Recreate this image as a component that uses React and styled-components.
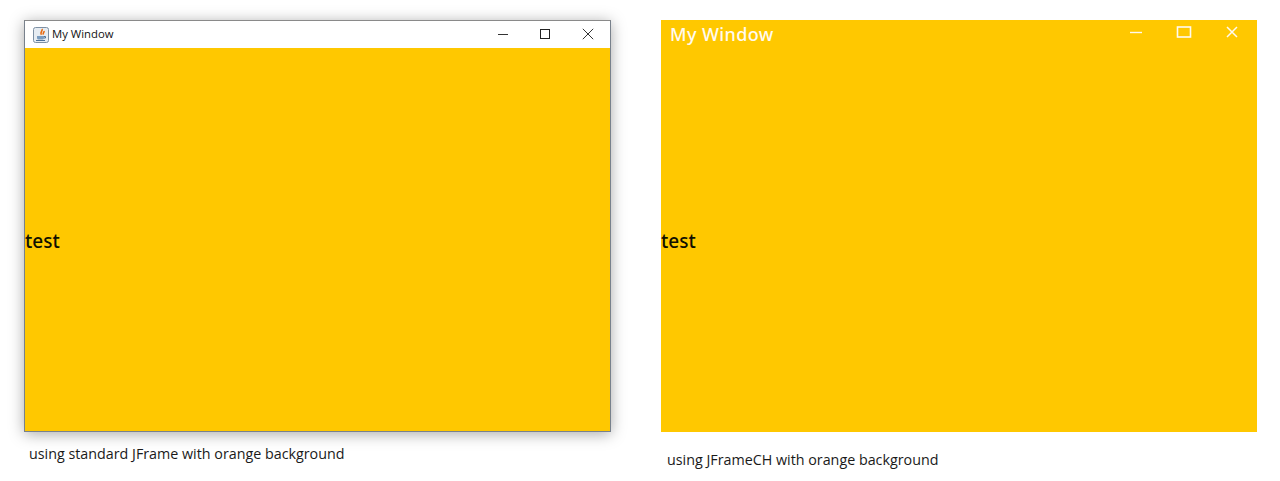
import React from 'react';
import styled, { createGlobalStyle } from 'styled-components';

const GlobalStyle = createGlobalStyle`
    html, body {
        margin: 0;
        padding: 0;
        background: #ffffff;
        overflow: hidden;
    }
`;

const Page = styled.div`
    display: flex;
    width: 1280px;
    height: 481px;
    box-sizing: border-box;
    padding: 20px 0 0 24px;
    gap: 50px;
    background: #ffffff;
    overflow: hidden;
`;

const Column = styled.div`
    display: flex;
    flex-direction: column;
    width: ${(props) => props.$width}px;
`;

const StandardFrame = styled.div`
    display: flex;
    flex-direction: column;
    height: 412px;
    box-sizing: border-box;
    border: 1px solid #78818c;
    border-top-color: #8a8a8a;
    box-shadow: 0 2px 14px rgba(0, 0, 0, 0.34);
`;

const TitleBar = styled.div`
    display: flex;
    align-items: center;
    flex: none;
    height: 27px;
    padding-left: 8px;
    background: #ffffff;
`;

const WindowTitle = styled.span`
    margin: 0 0 2px 3px;
    font: 11.3px "Open Sans", "Noto Sans", sans-serif;
    color: #111111;
    flex: 1;
`;

const ControlButton = styled.div`
    display: flex;
    align-items: center;
    justify-content: center;
    width: ${(props) => props.$width}px;
    height: 27px;
    padding-bottom: 2px;
    box-sizing: border-box;
`;

const Content = styled.div`
    flex: 1;
    display: flex;
    align-items: center;
    background: #ffc800;
`;

const TestLabel = styled.span`
    position: relative;
    top: ${(props) => props.$shift}px;
    font: 500 19px "Noto Sans", Lato, sans-serif;
    color: #111000;
`;

const CustomFrame = styled.div`
    position: relative;
    display: flex;
    height: 412px;
    background: #ffc800;
`;

const CustomTitle = styled.span`
    position: absolute;
    top: 2px;
    left: 9px;
    font: 500 18px "Noto Sans", Lato, sans-serif;
    letter-spacing: 0.4px;
    color: #fffaf0;
`;

const CustomControls = styled.div`
    position: absolute;
    top: 0;
    right: 0;
    display: flex;
    padding-right: 1px;
`;

const CustomButton = styled.div`
    display: flex;
    align-items: center;
    justify-content: center;
    width: 48px;
    height: 24px;
`;

const Caption = styled.p`
    margin: ${(props) => props.$top}px 0 0 ${(props) => props.$left}px;
    font: 14.3px "Open Sans", "Noto Sans", sans-serif;
    color: #1a1a1a;
    white-space: nowrap;
`;

const JavaIcon = () => (
    <svg width="16" height="16" viewBox="0 0 16 16">
        <rect x="0.5" y="0.5" width="15" height="15" rx="2" fill="#e6ecf2" stroke="#7d90a4" />
        <path d="M9 2c1.2 1.8-2.6 3-.6 5.8M11 4c.6 1.2-1.6 2-.6 3.6" fill="none" stroke="#e8690f" strokeWidth="1.6" />
        <path d="M4 9h7v2c0 1-1 1.5-2 1.5H6c-1 0-2-.5-2-1.5z" fill="#7a9cc0" />
        <path d="M11 9.5h1.5v1.5H11" fill="none" stroke="#4c7096" />
        <path d="M3 13.5h9" stroke="#4c7096" />
    </svg>
);

const App = () => {
    return (
        <Page>
            <GlobalStyle />
            <Column $width={587}>
                <StandardFrame>
                    <TitleBar>
                        <JavaIcon />
                        <WindowTitle>My Window</WindowTitle>
                        <ControlButton $width={42}>
                            <svg width="12" height="12" viewBox="0 0 12 12"><path d="M1 6.5h10" stroke="#333" strokeWidth="1" /></svg>
                        </ControlButton>
                        <ControlButton $width={42}>
                            <svg width="12" height="12" viewBox="0 0 12 12"><rect x="1.5" y="1.5" width="9" height="9" fill="none" stroke="#222" /></svg>
                        </ControlButton>
                        <ControlButton $width={44}>
                            <svg width="12" height="12" viewBox="0 0 12 12"><path d="M.8.8l10.4 10.4M11.2.8L.8 11.2" stroke="#333" strokeWidth="1" /></svg>
                        </ControlButton>
                    </TitleBar>
                    <Content>
                        <TestLabel $shift={1}>test</TestLabel>
                    </Content>
                </StandardFrame>
                <Caption $top={12} $left={5}>using standard JFrame with orange background</Caption>
            </Column>
            <Column $width={596}>
                <CustomFrame>
                    <Content>
                        <TestLabel $shift={15}>test</TestLabel>
                    </Content>
                    <CustomTitle>My Window</CustomTitle>
                    <CustomControls>
                        <CustomButton>
                            <svg width="14" height="14" viewBox="0 0 14 14"><path d="M1 7.5h12" stroke="#fffaf0" strokeWidth="1.4" /></svg>
                        </CustomButton>
                        <CustomButton>
                            <svg width="16" height="14" viewBox="0 0 16 14"><rect x="1.5" y="2" width="13" height="10" fill="none" stroke="#fffaf0" strokeWidth="1.6" /></svg>
                        </CustomButton>
                        <CustomButton>
                            <svg width="14" height="14" viewBox="0 0 14 14"><path d="M2 2l10 10M12 2L2 12" stroke="#fffaf0" strokeWidth="1.5" /></svg>
                        </CustomButton>
                    </CustomControls>
                </CustomFrame>
                <Caption $top={18} $left={6}>using JFrameCH with orange background</Caption>
            </Column>
        </Page>
    );
};

export default App;
